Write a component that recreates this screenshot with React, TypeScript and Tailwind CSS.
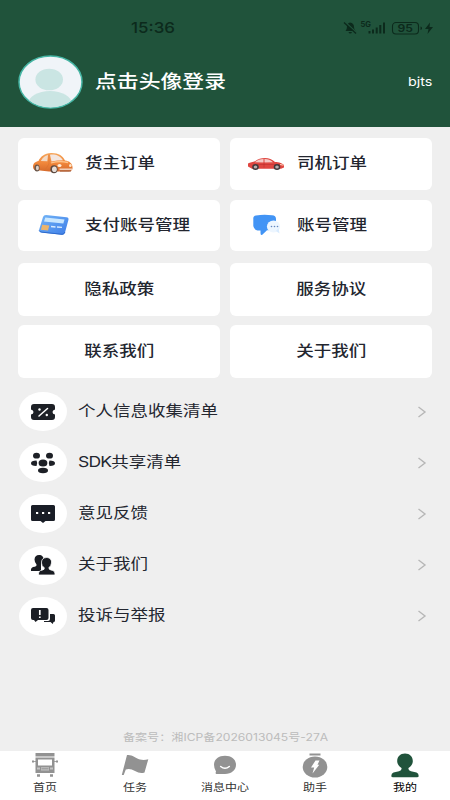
import type { ReactNode } from "react";

const CarIcon = () => (
  <svg width="42" height="24" viewBox="0 0 42 24">
    <defs>
      <linearGradient id="carBody" x1="0" y1="0" x2="0" y2="1">
        <stop offset="0" stopColor="#f6a75c" />
        <stop offset="0.55" stopColor="#f0863a" />
        <stop offset="1" stopColor="#d56a2c" />
      </linearGradient>
    </defs>
    <path d="M1 14.500C1 11.500 3.500 9.500 6.500 9C8.500 4.500 12.500 1.200 19 1C26.500 .8 31 4 33 8.500C37.500 9 40.300 11.500 40.500 15C40.700 18.500 39 19.500 36 19.500H17L8 18.500H4C1.800 18 1 16.500 1 14.500Z" fill="url(#carBody)" />
    <path d="M8.800 9C10.500 5.500 13 3.600 16 3L15.300 9.200Z" fill="#f3d9c4" />
    <path d="M18 2.700C23.500 2 28.500 4 31 8.300Q25 8.300 19.500 9.500Z" fill="#f3e6e0" />
    <path d="M17 2.500V12L13 18" stroke="#d8702f" strokeWidth=".6" fill="none" />
    <path d="M19 11Q27 8.500 36 10.500" stroke="#ffc58c" strokeWidth="1.300" fill="none" />
    <ellipse cx="27.500" cy="13.500" rx="2" ry="1.600" fill="#fff0dc" />
    <ellipse cx="38.300" cy="13.500" rx="1.300" ry="1.600" fill="#ffe6c8" />
    <path d="M27.500 17.300H40" stroke="#f0cdb5" strokeWidth="1.700" />
    <path d="M28 19H39" stroke="#9c5b3c" strokeWidth="1" />
    <ellipse cx="5" cy="16" rx="2.600" ry="3.500" fill="#6a574c" />
    <ellipse cx="5.400" cy="16" rx="1.500" ry="2.300" fill="#ddd0c7" />
    <ellipse cx="22" cy="17.300" rx="3.600" ry="4" fill="#5d4b42" />
    <ellipse cx="22.400" cy="17.300" rx="2.400" ry="2.800" fill="#e6ddd7" />
  </svg>
);

const SedanIcon = () => (
  <svg width="38" height="14" viewBox="0 0 38 14">
    <path d="M1 6.500C3 5 6 5 8 4.200C11 1.800 14 1 18 1C22 1 25 2.600 28 5C32 5.200 36 6.300 37 8.300V10.500L34 11.800H5L1 9.500Z" fill="#df4640" />
    <path d="M7.800 5.200C10.500 3 13 2 16.500 2V5.500ZM17.500 2C21 1.900 23.500 3 26 5.300L17.500 5.600Z" fill="#f5c9c5" />
    <path d="M10 7.500H34M17 5.500V10.500" stroke="#b82d2b" strokeWidth=".5" />
    <path d="M33 7.500L36.500 8.200" stroke="#ffd4bd" strokeWidth="1" />
    <ellipse cx="8.500" cy="10" rx="3.300" ry="2.900" fill="#41393b" />
    <ellipse cx="8.500" cy="10" rx="1.800" ry="1.600" fill="#b9adae" />
    <ellipse cx="30" cy="10" rx="3.300" ry="2.900" fill="#41393b" />
    <ellipse cx="30" cy="10" rx="1.800" ry="1.600" fill="#b9adae" />
  </svg>
);

const BankCardIcon = () => (
  <svg width="32" height="22" viewBox="0 0 32 22">
    <defs>
      <linearGradient id="bankCard" x1="0" y1="0" x2="1" y2="1">
        <stop offset="0" stopColor="#73b5f7" />
        <stop offset="1" stopColor="#3d7de8" />
      </linearGradient>
    </defs>
    <path d="M8 1L28.500 3.200Q31 3.500 30.400 6L27 18.500Q26.300 21 24 20.800L3.500 18.500Q.5 18 1.200 15.500L5 3Q5.600 1 8 1Z" fill="url(#bankCard)" />
    <path d="M1.200 16.500Q2 18 4 18.200L24 20.300Q26 20.400 27 18" stroke="#2d69cb" strokeWidth="1" fill="none" />
    <path d="M7.300 3.500L26.500 5.400L25.300 9.500L6 7.500Z" fill="#c9e7ff" />
    <path d="M4.200 10.800L11.300 11.500L10 16.500L2.900 15.800Z" fill="#eab46c" />
    <path d="M13 12.500L17.500 13M19 13L24 13.400" stroke="#d8ebff" strokeWidth="1.400" />
  </svg>
);

const ChatIcon = () => (
  <svg width="29" height="22" viewBox="0 0 29 22">
    <path d="M4 1.500Q12 .2 20 1.300Q24 1.500 24 5V12Q24 16 20 16.300H15L10 21Q8.500 21.500 8.500 19V16.500Q2 17 1.300 12V5Q1 2 4 1.500Z" fill="#4294f5" />
    <ellipse cx="21.500" cy="12.500" rx="6.600" ry="6" fill="#edf6ff" />
    <path d="M24 17L27.500 19.500L26.500 14Z" fill="#d9ecff" />
    <g fill="#6487bd">
      <circle cx="19.500" cy="12.500" r=".8" />
      <circle cx="22.500" cy="12.500" r=".8" />
      <circle cx="25.500" cy="12.500" r=".8" />
    </g>
  </svg>
);

const TicketIcon = () => (
  <svg width="26" height="18" viewBox="0 0 26 18">
    <path d="M4 1H22Q25 1 25 4V6.500Q22.500 7 22.500 9T25 11.500V14Q25 17 22 17H4Q1 17 1 14V11.500Q3.500 11 3.500 9T1 6.500V4Q1 1 4 1Z" fill="#1d2026" />
    <path d="M9 13L17.500 5.500" stroke="#fff" strokeWidth="1.500" strokeLinecap="round" />
    <circle cx="9.500" cy="6.500" r="1.200" fill="#fff" />
    <circle cx="16.800" cy="12" r="1.200" fill="#fff" />
  </svg>
);

const ShareIcon = () => (
  <svg width="26" height="22" viewBox="0 0 26 22" fill="#1d2026">
    <ellipse cx="6.500" cy="3.700" rx="3.500" ry="2.900" />
    <ellipse cx="19.500" cy="3.700" rx="3.500" ry="2.900" />
    <ellipse cx="13" cy="11" rx="4.400" ry="3.500" />
    <path d="M6.500 8.500Q1 8.500 1 11.300T6.500 14Q8 11 6.500 8.500ZM19.500 8.500Q25 8.500 25 11.300T19.500 14Q18 11 19.500 8.500Z" />
    <ellipse cx="13" cy="18.500" rx="5" ry="2.700" />
  </svg>
);

const FeedbackIcon = () => (
  <svg width="26" height="20" viewBox="0 0 26 20">
    <path d="M2.500 1H23.500Q25 1 25 2.500V15.500Q25 17 23.500 17H15.500L13 19L10.500 17H2.500Q1 17 1 15.500V2.500Q1 1 2.500 1Z" fill="#191d26" />
    <path d="M6 8H8.200V10H6ZM12 8H14.200V10H12ZM18 8H20.200V10H18Z" fill="#fff" />
  </svg>
);

const PeopleIcon = () => (
  <svg width="26" height="22" viewBox="0 0 26 22" fill="#191c22">
    <path d="M9 1C12 1 14 3 13.500 6L11 10V17H1Q.5 14 3 13Q7 12.500 6.500 10.500Q4.500 8 4.500 5.500Q4.800 1 9 1Z" />
    <path d="M16.500 3.500C20 3.500 22 6 21.500 9Q21.200 12 19 13.500Q18.500 15.500 21 16Q25.500 16.500 25 21H8.500Q8 16.500 12.500 16Q15 15.500 14 13.500Q11.500 12 11.500 9C11.200 6 13 3.500 16.500 3.500Z" stroke="#fff" strokeWidth=".8" />
  </svg>
);

const ReportIcon = () => (
  <svg width="26" height="18" viewBox="0 0 26 18" fill="#1b1e25">
    <path d="M3 1H16.500Q18.500 1 18.500 3V11Q18.500 13 16.500 13H8L5.500 15L4 13H3Q1 13 1 11V3Q1 1 3 1Z" />
    <path d="M20 7H23.500Q25 7 25 8.500V13.500Q25 15 23.500 15L22.800 17L20.500 15H14V14H18Q20 14 20 12Z" />
    <path d="M9.800 3V8M9.800 9.500V11" stroke="#fff" strokeWidth="1.700" />
  </svg>
);

const TruckIcon = () => (
  <svg width="28" height="26" viewBox="0 0 28 26" fill="#929292">
    <path d="M4.500 1H23.500V4.500H4.500Z" />
    <path fillRule="evenodd" d="M4.500 5.500H23.500V21H4.500ZM7 7.500V13.500H21V7.500Z" />
    <path d="M1 8.500H3V10.500H1ZM25 8.500H27V10.500H25ZM6 22.300H9V24.700H6ZM19 22.300H22V24.700H19Z" />
    <path d="M2 9.500H5M23 9.500H26" stroke="#929292" strokeWidth=".8" />
    <path d="M6 15.500H9V17.500H6ZM19 15.500H22V17.500H19ZM10 15.200H18V18.500H10Z" fill="#c4c4c4" />
    <path d="M10.500 16.800H17.500" stroke="#929292" />
  </svg>
);

const FlagIcon = () => (
  <svg width="28" height="22" viewBox="0 0 28 22">
    <path d="M6 1C11 .2 14 4 19 5.500Q23 6.500 27.300 5.200L23.500 18.500Q19 20 14 17Q9 14 4.800 15.500L2.700 21H.8Z" fill="#929292" />
  </svg>
);

const MessageIcon = () => (
  <svg width="24" height="20" viewBox="0 0 24 20">
    <path d="M12 .8C18.500 .8 23 4.500 23 9.800S18.500 19 12 19H3.500Q2 19 3 16.500Q1 13.500 1 9.800C1 4.500 5.500 .8 12 .8Z" fill="#929292" />
    <path d="M7.700 11.500Q12 15 16.300 11.500" fill="none" stroke="#fff" strokeWidth="1.600" strokeLinecap="round" />
  </svg>
);

const HelperIcon = () => (
  <svg width="26" height="25" viewBox="0 0 26 25">
    <path d="M7.500 .5H18.500V2.500H7.500Z" fill="#929292" />
    <ellipse cx="13" cy="14" rx="12.300" ry="10.500" fill="#929292" />
    <path d="M13.500 7.500H17.500L15.500 11.800H17.300L10.500 20.500L12.200 14.500H9Z" fill="#fff" />
  </svg>
);

const UserIcon = () => (
  <svg width="28" height="25" viewBox="0 0 28 25">
    <path d="M14 .5C19 .5 22 4 21.800 8.500Q21.500 12.500 17.500 15Q17 17.500 20 18.200L25.500 19.500Q27.700 20.300 27.700 23Q27.700 24.300 26 24.300H2Q.3 24.300 .3 23Q.3 20.300 2.500 19.500L8 18.200Q11 17.500 10.500 15Q6.500 12.500 6.200 8.500C6 4 9 .5 14 .5Z" fill="#20533b" />
  </svg>
);

const entries = [
  { label: "货主订单", icon: <CarIcon />, pos: "pl-[14px] w-[67px]" },
  { label: "司机订单", icon: <SedanIcon />, pos: "pl-[17px] w-[67px]" },
  { label: "支付账号管理", icon: <BankCardIcon />, pos: "pl-[20px] w-[67px]" },
  { label: "账号管理", icon: <ChatIcon />, pos: "pl-[22px] w-[67px]" },
];

const links = ["隐私政策", "服务协议", "联系我们", "关于我们"];

const menu = [
  { label: "个人信息收集清单", icon: <TicketIcon /> },
  { prefix: "SDK", label: "共享清单", icon: <ShareIcon /> },
  { label: "意见反馈", icon: <FeedbackIcon /> },
  { label: "关于我们", icon: <PeopleIcon /> },
  { label: "投诉与举报", icon: <ReportIcon /> },
];

const tabs = [
  { label: "首页", icon: <TruckIcon /> },
  { label: "任务", icon: <FlagIcon /> },
  { label: "消息中心", icon: <MessageIcon /> },
  { label: "助手", icon: <HelperIcon /> },
  { label: "我的", icon: <UserIcon />, active: true },
];

function Wide({ className = "", children }: { className?: string; children: ReactNode }) {
  return (
    <span className={`inline-block scale-x-[1.2] whitespace-nowrap ${className}`}>
      {children}
    </span>
  );
}

function StatusIcons() {
  return (
    <svg width="92" height="16" viewBox="0 0 92 16" fill="#0c2a1c">
      <path d="M2.500 11Q4 9.500 4 6.500Q4.300 3 7 2.500Q11 3 11 7Q11 9.500 12.500 11ZM5.500 12H9Q8.500 13.500 7.200 13.500T5.500 12Z" />
      <path d="M1.500 1.500L13.500 12.500" stroke="#20533b" strokeWidth="1.500" />
      <path d="M1 2.500L13 13.500" stroke="#0c2a1c" strokeWidth="1.300" />
      <text x="17.500" y="7" fontSize="7" fontWeight="700" fontFamily="Inter" textLength="10.500" lengthAdjust="spacingAndGlyphs">5G</text>
      <path d="M25.500 11H27.500V13.500H25.500ZM29 9.500H31V13.500H29ZM32.700 7.500H34.700V13.500H32.700ZM36.300 5H38.300V13.500H36.300ZM40 2.500H42V13.500H40Z" />
      <rect x="49.500" y="2.500" width="26" height="11.500" rx="3.500" fill="none" stroke="#0c2a1c" strokeWidth="1.100" />
      <text x="54.500" y="12" fontSize="10.500" fontWeight="600" fontFamily="Inter" textLength="15.500" lengthAdjust="spacingAndGlyphs">95</text>
      <path d="M77.500 6.500Q79 6.700 79 8.200T77.500 10Z" />
      <path d="M87 2.500L82 9H85.500L84.500 14L90 7H86.500Z" />
    </svg>
  );
}

export default function App() {
  return (
    <div className="flex h-[800px] w-[450px] flex-col overflow-hidden bg-[#efefef] font-['Inter','Noto_Sans_CJK_SC',sans-serif] text-[#23262f]">
      <header className="h-[127px] bg-[#20533b]">
        <div className="flex h-[55px] items-center justify-between pl-[131px] pr-[15px]">
          <span className="origin-left scale-x-[1.13] pt-[2px] text-[15px] font-medium text-[#0c2a1c]">
            15:36
          </span>
          <StatusIcons />
        </div>
        <div className="flex h-[53px] items-center pl-[18px] pr-[18px]">
          <svg width="65" height="54" viewBox="0 0 65 54">
            <defs>
              <clipPath id="avatar">
                <ellipse cx="32.500" cy="27" rx="31" ry="25.500" />
              </clipPath>
            </defs>
            <ellipse cx="32.500" cy="27" rx="31.500" ry="26" fill="#f0f4f8" stroke="#46b6a5" strokeWidth="1.500" />
            <g fill="#cae5e3" clipPath="url(#avatar)">
              <ellipse cx="31.200" cy="24.500" rx="13.800" ry="10.800" />
              <ellipse cx="32" cy="49" rx="22" ry="13" />
            </g>
          </svg>
          <Wide className="ml-[12px] origin-left text-[18.2px] font-medium text-white">
            点击头像登录
          </Wide>
          <Wide className="ml-auto origin-right text-[12px] text-white">bjts</Wide>
        </div>
      </header>

      <main className="flex flex-1 flex-col">
        <div className="mt-[11px] grid grid-cols-2 gap-x-[10px] gap-y-[10px] px-[18px]">
          {entries.map(({ label, icon, pos }) => (
            <div key={label} className="flex h-[51.5px] items-center rounded-md bg-white">
              <span className={`shrink-0 ${pos}`}>{icon}</span>
              <Wide className="origin-left pt-px text-[14.6px] font-medium">{label}</Wide>
            </div>
          ))}
        </div>
        <div className="mt-[12px] grid grid-cols-2 gap-x-[10px] gap-y-[9px] px-[18px]">
          {links.map((label) => (
            <div key={label} className="flex h-[53px] items-center justify-center rounded-md bg-white">
              <Wide className="pt-px text-[14.6px] font-medium">{label}</Wide>
            </div>
          ))}
        </div>

        <div className="mt-[8px] pl-[19px] pr-[23px]">
          {menu.map(({ prefix, label, icon }) => (
            <div key={label} className="flex h-[51.2px] items-center">
              <span className="flex h-[39px] w-[48px] shrink-0 items-center justify-center rounded-[50%] bg-white">
                {icon}
              </span>
              <Wide className="ml-[11px] origin-left text-[14.6px]">
                {prefix && <span className="tracking-[-0.7px]">{prefix}</span>}
                {label}
              </Wide>
              <svg className="ml-auto" width="10" height="12" viewBox="0 0 10 12">
                <path d="M1.500 1L8 6L1.500 11" fill="none" stroke="#b7b7b7" strokeWidth="1.400" />
              </svg>
            </div>
          ))}
        </div>

        <p className="mt-auto mb-[5px] text-center text-[10.1px] leading-[18px] text-[#bcbcbc]">
          <Wide>备案号：湘ICP备2026013045号-27A</Wide>
        </p>
      </main>

      <nav className="grid h-[49px] grid-cols-5 bg-white">
        {tabs.map(({ label, icon, active }) => (
          <div key={label} className="flex flex-col items-center">
            <span className="flex h-[28px] items-center">{icon}</span>
            <Wide className={`text-[10px] leading-[16px] ${active ? "text-black" : "text-[#333]"}`}>
              {label}
            </Wide>
          </div>
        ))}
      </nav>
    </div>
  );
}
